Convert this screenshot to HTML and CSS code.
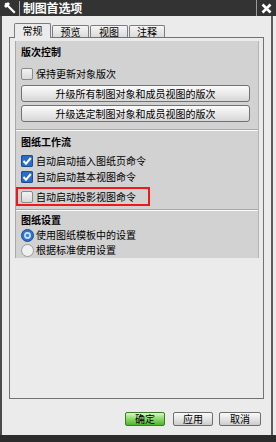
FILE: index.html
```html
<!DOCTYPE html>
<html lang="zh">
<head>
<meta charset="utf-8">
<link rel="stylesheet" href="styles.css">
</head>
<body>
<div class="window">
  <div class="titlebar">
    <span class="pin"><svg width="14" height="14" viewBox="0 0 14 14"><path d="M3 3 L11 11" stroke="#fff" stroke-width="2.2" stroke-linecap="square"/><path d="M1 5 L5 1 L7 3 L3 7 Z" fill="#fff"/></svg></span>
    <span class="tsep"></span>
    <span class="title">制图首选项</span>
    <span class="csep"></span>
    <span class="close"><svg width="11" height="11" viewBox="0 0 11 11"><path d="M1.5 1.5 L9.5 9.5 M9.5 1.5 L1.5 9.5" stroke="#fff" stroke-width="2.6"/></svg></span>
  </div>
  <div class="body">
    <div class="tabs">
      <div class="tab active">常规</div>
      <div class="tab">预览</div>
      <div class="tab w38">视图</div>
      <div class="tab w36">注释</div>
    </div>
    <div class="panel">
      <div class="groups">
        <div class="group g1">
          <div class="gtitle">版次控制</div>
          <div class="row"><span class="cb"></span><span class="lbl">保持更新对象版次</span></div>
          <div class="gbtn b1">升级所有制图对象和成员视图的版次</div>
          <div class="gbtn b2">升级选定制图对象和成员视图的版次</div>
        </div>
        <div class="group g2">
          <div class="gtitle">图纸工作流</div>
          <div class="row r1"><span class="cb on"><svg width="12" height="12" viewBox="0 0 12 12"><path d="M2.5 6 L5 8.7 L9.8 3" stroke="#fff" stroke-width="2" fill="none"/></svg></span><span class="lbl">自动启动插入图纸页命令</span></div>
          <div class="row r2"><span class="cb on"><svg width="12" height="12" viewBox="0 0 12 12"><path d="M2.5 6 L5 8.7 L9.8 3" stroke="#fff" stroke-width="2" fill="none"/></svg></span><span class="lbl">自动启动基本视图命令</span></div>
          <div class="highlight"><div class="row"><span class="cb"></span><span class="lbl">自动启动投影视图命令</span></div></div>
        </div>
        <div class="group g3">
          <div class="gtitle">图纸设置</div>
          <div class="row"><span class="rb"><svg width="13" height="13" viewBox="0 0 13 13"><circle cx="6.5" cy="6.5" r="6" fill="#2f72cc" stroke="#1b4f9c"/><circle cx="6.5" cy="6.5" r="3.4" fill="#cfe6ff"/><circle cx="6.5" cy="6.5" r="1.8" fill="#3b86e0"/></svg></span><span class="lbl">使用图纸模板中的设置</span></div>
          <div class="row"><span class="rb"><svg width="13" height="13" viewBox="0 0 13 13"><circle cx="6.5" cy="6.5" r="6" fill="#efefef" stroke="#9a9a9a"/></svg></span><span class="lbl">根据标准使用设置</span></div>
        </div>
      </div>
    </div>
    <div class="footer">
      <div class="btn ok">确定</div>
      <div class="btn apply">应用</div>
      <div class="btn cancel">取消</div>
    </div>
  </div>
</div>
</body>
</html>
```

FILE: styles.css
```css
html, body {
  margin: 0;
  padding: 0;
  background: #ececec;
}
body {
  width: 276px;
  height: 442px;
  overflow: hidden;
  font-family: "Noto Sans CJK SC", "Noto Sans", sans-serif;
  font-size: 10px;
  color: #000;
}
.window {
  width: 276px;
  height: 442px;
  box-sizing: border-box;
  border-bottom: 7px solid #2c2c2c;
  display: flex;
  flex-direction: column;
  background: #ebebeb;
}
.titlebar {
  height: 16px;
  flex: none;
  background: #333333;
  display: flex;
  align-items: center;
  color: #fff;
}
.pin {
  width: 15px;
  height: 14px;
  margin-left: 3px;
  display: flex;
}
.tsep {
  width: 1px;
  height: 15px;
  background: #a8a8a8;
  margin-left: 1px;
  margin-right: 3px;
}
.title {
  font-weight: bold;
  font-size: 12px;
  line-height: 16px;
  letter-spacing: -0.2px;
}
.csep {
  margin-left: auto;
  width: 1px;
  height: 16px;
  background: #9a9a9a;
}
.close {
  width: 11px;
  height: 11px;
  display: flex;
  margin-left: 4px;
  margin-right: 4px;
}
.body {
  flex: 1;
  display: flex;
  flex-direction: column;
  border-left: 2px solid #4a4a4a;
  border-right: 2px solid #5a5a5a;
  margin-right: 3px;
  padding-top: 7px;
}
.tabs {
  display: flex;
  align-items: flex-end;
  height: 14px;
  margin-left: 12px;
  gap: 1px;
  position: relative;
  z-index: 1;
}
.tab {
  width: 37px;
  height: 12px;
  box-sizing: border-box;
  border: 1px solid #7d7d7d;
  border-bottom: none;
  border-radius: 2px 2px 0 0;
  background: linear-gradient(#f6f6f6, #dadada);
  font-size: 10px;
  line-height: 11px;
  text-align: center;
}
.tab.w38 { width: 38px; }
.tab.w36 { width: 36px; }
.tab.active {
  height: 15px;
  margin-bottom: -1px;
  background: #ebebeb;
  line-height: 13px;
}
.panel {
  height: 362px;
  box-sizing: border-box;
  margin-left: 7px;
  width: 255px;
  border: 1px solid #727272;
  padding: 3px 4px 0 5px;
}
.groups {
  border-left: 1px solid #a9a9a9;
  border-right: 1px solid #b5b5b5;
}
.group {
  background: #d2d2d2;
  padding-left: 5px;
  display: flex;
  flex-direction: column;
  align-items: flex-start;
}
.gtitle {
  font-weight: bold;
  line-height: 14px;
  height: 14px;
}
.row {
  display: flex;
  align-items: center;
  height: 14px;
  line-height: 14px;
}
.lbl {
  margin-left: 3px;
  white-space: nowrap;
}
.cb {
  width: 12px;
  height: 12px;
  box-sizing: border-box;
  border: 1px solid #8a8a8a;
  border-radius: 2px;
  background: linear-gradient(#f2f2f2, #d9d9d9);
  display: flex;
}
.cb.on {
  border: none;
  background: #2a6dc8;
  box-shadow: inset 0 0 0 1px #1a4c98;
}
.rb {
  width: 13px;
  height: 13px;
  display: flex;
}
.g1 {
  padding-top: 4px;
  padding-bottom: 7px;
  border-bottom: 1px solid #a8a8a8;
}
.g1 .row { margin-top: 8px; }
.gbtn {
  width: 229px;
  height: 17px;
  box-sizing: border-box;
  border: 1px solid #727272;
  border-radius: 3px;
  background: linear-gradient(#fbfbfb, #e6e6e6 60%, #d6d6d6);
  text-align: center;
  line-height: 15px;
  white-space: nowrap;
}
.b1 { margin-top: 4px; }
.b2 { margin-top: 3px; }
.g2 {
  border-top: 1px solid #fbfbfb;
  padding-top: 4px;
  padding-bottom: 3px;
  border-bottom: 1px solid #a8a8a8;
}
.g2 .r1 { margin-top: 5px; }
.g2 .r2 { margin-top: 2px; }
.highlight {
  margin-top: 3px;
  margin-left: -5px;
  width: 134px;
  height: 19px;
  box-sizing: border-box;
  border: 2px solid #f01818;
  padding-left: 3px;
  display: flex;
  align-items: center;
}
.g3 {
  border-top: 1px solid #fbfbfb;
  padding-top: 2px;
  padding-bottom: 1px;
}
.g3 .row { margin-top: 1px; }
.g3 .lbl { margin-left: 2px; }
.footer {
  display: flex;
  justify-content: flex-end;
  padding-right: 10px;
  margin-top: 13px;
}
.btn {
  height: 14px;
  box-sizing: border-box;
  border: 1px solid #6d6d6d;
  border-radius: 2px;
  background: linear-gradient(#fafafa, #e2e2e2 55%, #cccccc);
  text-align: center;
  line-height: 12px;
  font-size: 10px;
}
.ok {
  width: 40px;
  border-color: #3c7a2a;
  background: linear-gradient(#d9f7c4, #8ad86a 50%, #4fb52f);
}
.apply {
  width: 40px;
  margin-left: 8px;
}
.cancel {
  width: 42px;
  margin-left: 6px;
}
```
